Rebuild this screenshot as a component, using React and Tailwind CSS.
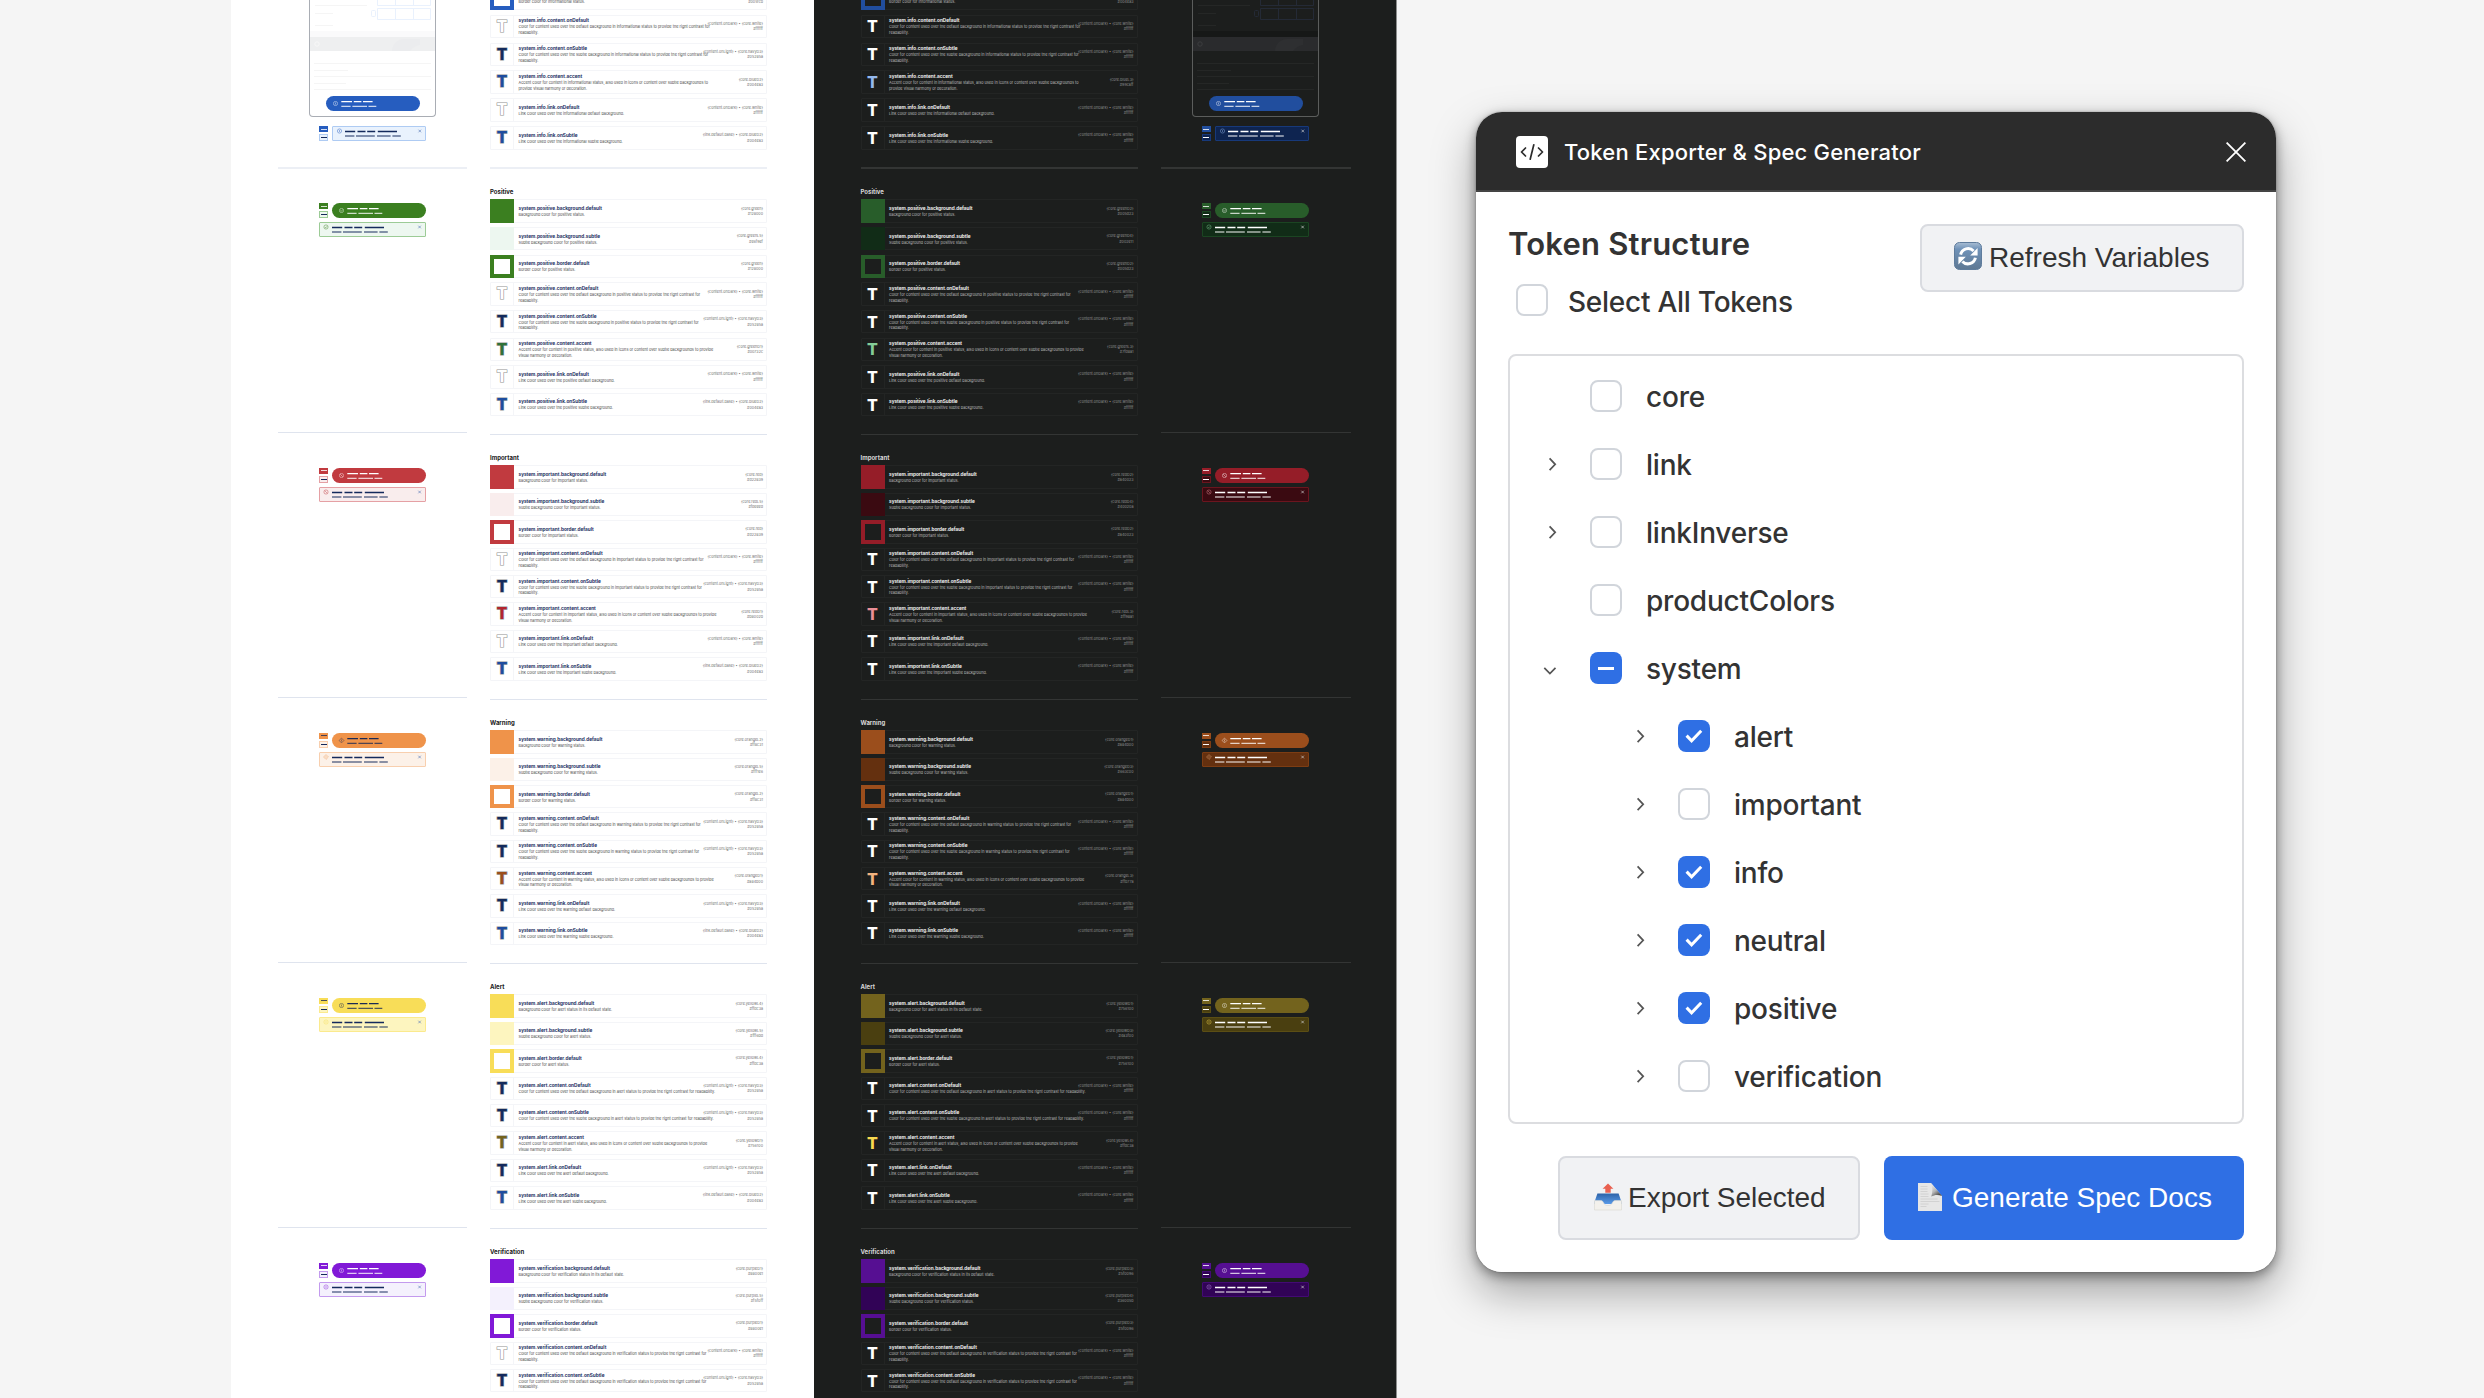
import React from "react";
import { clsx } from "clsx";

const WHITE = ["{content.onDark} • {core.white}", "#ffffff"];
const NAVY = ["{content.onLight} • {core.navyD3}", "#05285a"];
const LINK = ["{link.default.base} • {core.blueD2}", "#004ea3"];

const SECTIONS = [
  {
    key: "info",
    noun: "informational",
    rowsH: "h-[169px]",
    previewH: "h-[169px]",
    gap: "gap-[4.5px]",
    light: {
      main: "#265dbf", subtle: "#e9f2fd", edge: "#aecbf3", accent: "#1d4c9f", pillInk: "#ffffff",
      def: ["{core.blue}", "#005fcb"], sub: ["{core.blueL5}", "#e6f2ff"], acc: ["{core.blueD2}", "#004ea3"],
      onDef: "outline",
    },
    dark: {
      main: "#214e9e", subtle: "#0e2450", edge: "#17397a", accent: "#94b9ee", pillInk: "#ffffff",
      def: ["{core.blueD2}", "#004ea3"], sub: ["{core.blueD4}", "#002652"], acc: ["{core.blueL3}", "#99caff"],
    },
  },
  {
    key: "positive", title: "Positive",
    rowsH: "h-[266px]", previewH: "h-[264px]", gap: "gap-[4.25px]",
    light: {
      main: "#3b7f20", subtle: "#edf7f0", edge: "#9ccb96", accent: "#2f7138", pillInk: "#ffffff",
      def: ["{core.green}", "#128000"], sub: ["{core.greenL5}", "#e6f9ef"], acc: ["{core.greenD1}", "#00732c"],
      onDef: "outline",
    },
    dark: {
      main: "#285d2a", subtle: "#112c17", edge: "#1b4522", accent: "#83cd97", pillInk: "#ffffff",
      def: ["{core.greenD2}", "#005d23"], sub: ["{core.greenD4}", "#002e11"], acc: ["{core.greenL3}", "#7fd8a1"],
    },
  },
  {
    key: "important", title: "Important",
    rowsH: "h-[265px]", previewH: "h-[265px]", gap: "gap-[4px]",
    light: {
      main: "#c13a3f", subtle: "#f9eded", edge: "#e5a0a4", accent: "#b3252f", pillInk: "#ffffff",
      def: ["{core.red}", "#d22839"], sub: ["{core.redL5}", "#fdeeed"], acc: ["{core.redD1}", "#b8002b"],
      onDef: "outline",
    },
    dark: {
      main: "#951d28", subtle: "#3a0a11", edge: "#6b151e", accent: "#ea8f97", pillInk: "#ffffff",
      def: ["{core.redD2}", "#a40023"], sub: ["{core.redD4}", "#40020a"], acc: ["{core.redL3}", "#ff98a1"],
    },
  },
  {
    key: "warning", title: "Warning",
    rowsH: "h-[264px]", previewH: "h-[265px]", gap: "gap-[3.95px]",
    light: {
      main: "#ef934a", subtle: "#fcf1e8", edge: "#f8cfae", accent: "#9b4e1c", pillInk: "#1b2a55",
      def: ["{core.orangeL2}", "#ff8c31"], sub: ["{core.orangeL5}", "#fff1e6"], acc: ["{core.orangeD1}", "#a84b00"],
      onDef: "navy",
    },
    dark: {
      main: "#9b4e1c", subtle: "#64300f", edge: "#7d3d13", accent: "#f2b37f", pillInk: "#ffffff",
      def: ["{core.orangeD1}", "#a84b00"], sub: ["{core.orangeD3}", "#663c00"], acc: ["{core.orangeL3}", "#ffb77a"],
    },
  },
  {
    key: "alert", title: "Alert", phrase: " in its default state", wide: true,
    rowsH: "h-[265px]", previewH: "h-[265px]", gap: "gap-[4px]",
    light: {
      main: "#f8dd58", subtle: "#fdf5bf", edge: "#fbea8e", accent: "#73631d", pillInk: "#1b2a55",
      def: ["{core.yellowL4}", "#ffdc3a"], sub: ["{core.yellowL5}", "#fff6bd"], acc: ["{core.yellowD1}", "#756100"],
      onDef: "navy",
    },
    dark: {
      main: "#73631d", subtle: "#4a3f10", edge: "#5b4e14", accent: "#f8d94f", pillInk: "#ffffff",
      def: ["{core.yellowD1}", "#756100"], sub: ["{core.yellowD3}", "#4a3f00"], acc: ["{core.yellowL4}", "#ffdc3a"],
    },
  },
  {
    key: "verification", title: "Verification", phrase: " in its default state",
    rowsH: "h-[264px]", previewH: "h-[264px]", gap: "gap-[4px]",
    light: {
      main: "#8119d7", subtle: "#f4f1fd", edge: "#c39aee", accent: "#6a12b3", pillInk: "#ffffff",
      def: ["{core.purpleD1}", "#8800e1"], sub: ["{core.purpleL5}", "#f5f0ff"], acc: ["{core.purpleD2}", "#7300be"],
      onDef: "outline",
    },
    dark: {
      main: "#560f92", subtle: "#310356", edge: "#430a74", accent: "#c596f0", pillInk: "#ffffff",
      def: ["{core.purpleD3}", "#5f0096"], sub: ["{core.purpleD4}", "#36005b"], acc: ["{core.purpleL3}", "#cc99ff"],
    },
  },
];

function buildRows(s, dark) {
  const c = dark ? s.dark : s.light;
  const n = s.noun || s.key;
  const tail = " to provide the right contrast for";
  const content = (bg) =>
    s.wide
      ? [`Color for content used over the ${bg} background in ${n} status${tail} readability.`]
      : [`Color for content used over the ${bg} background in ${n} status${tail}`, "readability."];
  const accent =
    s.key === "info"
      ? [`Accent color for content in ${n} status, also used in icons or content over subtle backgrounds to`, "provide visual harmony or decoration."]
      : [`Accent color for content in ${n} status, also used in icons or content over subtle backgrounds to provide`, "visual harmony or decoration."];
  const onDef = dark ? "#ffffff" : c.onDef === "navy" ? "#142a5c" : "#ffffff";
  const onDefRef = dark || c.onDef !== "navy" ? WHITE : NAVY;
  const rows = [
    { t: "background.default", k: "fill", color: c.main, d: [`Background color for ${n} status${s.phrase || ""}.`], r: c.def },
    { t: "background.subtle", k: "fill", color: c.subtle, d: [`Subtle background color for ${n} status.`], r: c.sub },
    { t: "border.default", k: "ring", color: c.main, d: [`Border color for ${n} status.`], r: c.def },
    { t: "content.onDefault", k: "T", color: onDef, d: content("default"), r: onDefRef },
    { t: "content.onSubtle", k: "T", color: dark ? "#ffffff" : "#142a5c", d: content(s.key === "verification" ? "default" : "subtle"), r: dark ? WHITE : NAVY },
    { t: "content.accent", k: "T", color: c.accent, d: accent, r: c.acc },
    { t: "link.onDefault", k: "T", color: onDef, d: [`Link color used over the ${n} default background.`], r: onDefRef },
    { t: "link.onSubtle", k: "T", color: dark ? "#ffffff" : "#1d4c9f", d: [`Link color used over the ${n} subtle background.`], r: dark ? WHITE : LINK },
  ];
  if (s.key === "info") return rows.slice(2);
  if (s.key === "verification") return rows.slice(0, 5);
  return rows;
}

function Swatch({ row, dark }) {
  if (row.k === "fill") return <div className="w-6 shrink-0 self-stretch" style={{ background: row.color }} />;
  if (row.k === "ring")
    return <div className="w-6 shrink-0 self-stretch border-4" style={{ borderColor: row.color }} />;
  return (
    <div
      className={clsx(
        "flex w-6 shrink-0 items-center justify-center self-stretch border-r pl-px font-['Inter'] font-extrabold leading-none",
        dark ? "border-[#232524] text-[16px]" : "border-[#f4f5f8] text-[15.5px] [-webkit-text-stroke:1.2px_#929292] [paint-order:stroke_fill]"
      )}
      style={{ color: row.color }}
    >
      T
    </div>
  );
}

function TokenRow({ section, row, dark }) {
  const atTop = section.key === "info" && row.k === "ring";
  return (
    <div
      className={clsx(
        "flex h-[23.4px] shrink-0 items-center whitespace-nowrap rounded-[1px] border",
        dark ? "border-[#232524]" : "border-[#f4f5f8]"
      )}
    >
      <div className="-my-px -ml-px flex self-stretch">
        <Swatch row={row} dark={dark} />
      </div>
      <div className={clsx("ml-[4.5px] flex min-w-0 flex-1 flex-col", atTop && "pt-[7px]")}>
        {!atTop && (
          <div className={clsx("text-[4.7px] font-bold leading-[7px]", dark ? "text-[#f0f0f0]" : "text-[#1c2f5f]")}>
            system.{section.key}.{row.t}
          </div>
        )}
        {row.d.map((line) => (
          <div key={line} className={clsx("text-[3.83px] leading-[5.4px]", dark ? "text-[#b9bab9]" : "text-[#4a4a4a]")}>
            {line}
          </div>
        ))}
      </div>
      <div className={clsx("mr-[3px] shrink-0 text-right text-[3.7px] leading-[5.5px] -ml-[90px]", dark ? "text-[#8f9090]" : "text-[#6f6f6f]")}>
        {atTop ? (
          <div className="pt-[5.5px]">{row.r[1]}</div>
        ) : (
          row.r.map((line) => <div key={line}>{line}</div>)
        )}
      </div>
    </div>
  );
}

function RowsColumn({ dark }) {
  return (
    <div className="flex w-[277px] shrink-0 flex-col">
      {SECTIONS.map((s, i) => (
        <section
          key={s.key}
          className={clsx(
            "flex shrink-0 flex-col",
            s.rowsH,
            s.key === "info" ? "border-b-2" : "border-b",
            dark ? "border-[#333534]" : i === 0 ? "border-[#eceff5]" : "border-[#dfe4ee]"
          )}
        >
          {s.title ? (
            <div className={clsx("flex h-[30.4px] shrink-0 items-end pb-[3.5px] text-[6px] font-bold leading-[9px]", dark ? "text-[#d8d8d8]" : "text-[#1a1a1a]")}>
              {s.title}
            </div>
          ) : (
            <div className="-mt-[13.2px] shrink-0" />
          )}
          <div className={clsx("flex flex-col", s.gap)}>
            {buildRows(s, dark).map((row) => (
              <TokenRow key={row.t} section={s} row={row} dark={dark} />
            ))}
          </div>
        </section>
      ))}
    </div>
  );
}

function StatusGlyph({ x, y, kind, color }) {
  return (
    <g stroke={color} strokeWidth="0.6" fill="none" opacity="0.75">
      {kind === "warning" ? (
        <path d={`M${x} ${y - 2.4}l2.4 2.4l-2.4 2.4l-2.4 -2.4z`} />
      ) : (
        <circle cx={x} cy={y} r="2.1" />
      )}
      {kind === "positive" ? (
        <path d={`M${x - 1} ${y}l0.8 0.8l1.4 -1.6`} />
      ) : kind === "important" ? (
        <path d={`M${x - 1.3} ${y - 1.3}l2.6 2.6`} />
      ) : (
        <path d={`M${x} ${y - 1}v2`} />
      )}
    </g>
  );
}

function Pill({ s, c }) {
  return (
    <div className="h-[15px] w-[94px] rounded-full" style={{ background: c.main }}>
      <svg viewBox="0 0 94 15" className="block h-[15px] w-[94px]">
        <StatusGlyph x={9.5} y={7.5} kind={s.key} color={c.pillInk} />
        <g stroke={c.pillInk} strokeWidth="1.4">
          <path d="M15.3 5.6h10.7M27.8 5.6h7.6M37 5.6h9.6" />
          <path d="M15.3 10.4h9.3M26.4 10.4h14.6M42.5 10.4h7.8" opacity="0.75" />
        </g>
      </svg>
    </div>
  );
}

function SubtleBox({ s, c, dark, narrow }) {
  const ink = dark ? "#ffffff" : "#142a5c";
  const line = dark ? "#c9c9c9" : "#6684bd";
  const glyph = dark ? c.accent : c.main;
  const off = narrow ? 0.5 : 0;
  return (
    <div
      className={clsx("h-[15px] overflow-hidden rounded-[1px] border", narrow ? "w-[94px]" : "w-[107px]")}
      style={{ background: c.subtle, borderColor: c.edge }}
    >
      <svg viewBox={narrow ? "1 1 92 13" : "1 1 105 13"} className="block h-full w-full">
        <StatusGlyph x={7 + off} y={5} kind={s.key} color={glyph} />
        <g stroke={ink} strokeWidth="1.4">
          <path d="M13 5.5h10.2M25.5 5.5h8M35.2 5.5h8M45.8 5.5h19.2" />
          <path d="M13 10h9.4M24 10h18.8M45 10h13.6M60.4 10h8.4" opacity="0.65" />
        </g>
        <path
          d={narrow ? "M86.5 3.7l2.6 2.6m0 -2.6l-2.6 2.6" : "M99.3 3.7l2.6 2.6m0 -2.6l-2.6 2.6"}
          stroke={line}
          strokeWidth="0.7"
        />
      </svg>
    </div>
  );
}

function Badges({ c, dark }) {
  return (
    <div className="flex w-[9px] shrink-0 flex-col gap-[2px]">
      <div className="flex h-[6px] items-center justify-center" style={{ background: c.main }}>
        <div className="h-px w-[6px] opacity-80" style={{ background: c.pillInk }} />
      </div>
      <div className="flex h-[7px] items-center justify-center border" style={{ background: c.subtle, borderColor: c.edge }}>
        <div className={clsx("h-px w-[6px]", dark ? "bg-white" : "bg-[#142a5c]")} />
      </div>
    </div>
  );
}

function Phone({ s, c, dark }) {
  const grid = dark ? "#242a36" : "#e9f1fd";
  const rule = dark ? "#252726" : "#f5f5f5";
  return (
    <div
      className={clsx(
        "ml-[31px] flex h-[117px] w-[127px] flex-col justify-between rounded-b-[4px] border border-t-0 pb-[5px]",
        dark ? "border-[#5b5d5c]" : "border-[#a9adb4]"
      )}
    >
      <svg viewBox="0 0 125 95" className="block h-[95px] w-[125px]">
        <g fill="none" stroke={grid}>
          <path d="M67.5 0v5.5h53V0M85.5 0v5.5M103.5 0v5.5" />
          <path d="M67.5 8.5h53v11h-53zM85.5 8.5v11M103.5 8.5v11" />
          <rect x="61.5" y="10.5" width="4" height="6" rx="1" />
        </g>
        <path d="M5 5.5h52M5 13.5h18M5 25.5h18" stroke={rule} />
        <rect y="31" width="125" height="6" fill={dark ? "#161817" : "#fafafb"} />
        <rect y="37" width="125" height="14" fill={dark ? "#2a2b2d" : "#eeeff0"} />
        <path d="M82 51a12 12 0 0 1 12 -12h16v6a16 16 0 0 0 -10 6z" fill={dark ? "#2e2f31" : "#ebecee"} />
        <circle cx="7" cy="44" r="2.2" fill="none" stroke={dark ? "#3c3d3f" : "#f8f8f8"} />
        <path d="M4 63.5h117M4 76.5h117M4 70.5h34M4 83.5h32M4 89.5h117" stroke={rule} />
      </svg>
      <div className="ml-[16px] h-[15px]">
        <Pill s={s} c={c} />
      </div>
    </div>
  );
}

function PreviewColumn({ dark }) {
  return (
    <div className={clsx("flex shrink-0 flex-col", dark ? "w-[190px]" : "w-[189px]")}>
      {SECTIONS.map((s, i) => {
        const c = dark ? s.dark : s.light;
        return (
          <div
            key={s.key}
            className={clsx(
              "flex shrink-0 flex-col",
              s.previewH,
              i === 0 ? "border-b-2" : "border-b",
              dark ? "border-[#333534]" : i === 0 ? "border-[#eceff5]" : "border-[#dfe4ee]"
            )}
          >
            {i === 0 ? (
              <>
                <Phone s={s} c={c} dark={dark} />
                <div className="ml-[41px] mt-[9px] flex gap-1">
                  <Badges c={c} dark={dark} />
                  <SubtleBox s={s} c={c} dark={dark} narrow />
                </div>
              </>
            ) : (
              <div className={clsx("ml-[41px] flex flex-col gap-1", i === 1 ? "mt-[34px]" : "mt-[34.6px]")}>
                <div className="flex gap-1">
                  <Badges c={c} dark={dark} />
                  <Pill s={s} c={c} />
                </div>
                <SubtleBox s={s} c={c} dark={dark} />
              </div>
            )}
          </div>
        );
      })}
    </div>
  );
}

function Checkbox({ state }) {
  if (state === "on")
    return (
      <div className="flex size-8 shrink-0 items-center justify-center rounded-[8px] bg-[#2f6fe4]">
        <svg viewBox="0 0 32 32" className="size-8" fill="none" stroke="#fff" strokeWidth="3">
          <path d="M8.6 15.6l5 5.2l9.6 -10" />
        </svg>
      </div>
    );
  if (state === "mixed")
    return (
      <div className="flex size-8 shrink-0 items-center justify-center rounded-[8px] bg-[#2f6fe4]">
        <div className="h-[3px] w-4 bg-white" />
      </div>
    );
  return <div className="size-8 shrink-0 rounded-[8px] border-2 border-[#d1d5db] bg-white" />;
}

const TREE = [
  { label: "core" },
  { label: "link", chevron: "right" },
  { label: "linkInverse", chevron: "right" },
  { label: "productColors" },
  { label: "system", chevron: "down", state: "mixed" },
  { label: "alert", chevron: "right", child: true, state: "on" },
  { label: "important", chevron: "right", child: true },
  { label: "info", chevron: "right", child: true, state: "on" },
  { label: "neutral", chevron: "right", child: true, state: "on" },
  { label: "positive", chevron: "right", child: true, state: "on" },
  { label: "verification", chevron: "right", child: true },
];

function TreeItem({ item }) {
  return (
    <div className={clsx("flex h-[68px] items-center", item.child ? "pl-[112px]" : "pl-6")}>
      <div className="flex w-[56px] shrink-0 items-center">
        {item.chevron === "right" && (
          <svg viewBox="0 0 24 24" className="size-6" fill="none" stroke="#555" strokeWidth="1.7">
            <path d="M15.6 6.4l5.6 5.9l-5.6 5.9" />
          </svg>
        )}
        {item.chevron === "down" && (
          <svg viewBox="0 0 24 24" className="size-6" fill="none" stroke="#555" strokeWidth="1.7">
            <path d="M10.3 11.8l5.6 5.8l5.6 -5.8" />
          </svg>
        )}
      </div>
      <Checkbox state={item.state} />
      <span className="ml-6 pt-[2px] text-[28px] font-medium tracking-[-0.22px] text-[#333]">{item.label}</span>
    </div>
  );
}

function RefreshIcon() {
  return (
    <svg viewBox="0 0 28 28" className="size-7">
      <defs>
        <linearGradient id="refreshTile" x1="0" y1="0" x2="0" y2="1">
          <stop offset="0" stopColor="#a9bdd3" />
          <stop offset="0.25" stopColor="#6f92b8" />
          <stop offset="1" stopColor="#5e7893" />
        </linearGradient>
      </defs>
      <rect x="0.5" y="0.5" width="27" height="27" rx="5" fill="url(#refreshTile)" stroke="#5f7c9c" />
      <g fill="none" stroke="#fff" strokeWidth="3">
        <path d="M6.6 12.6A7.6 7.6 0 0 1 19.6 9" />
        <path d="M21.4 15.8A7.6 7.6 0 0 1 8.4 19.4" />
      </g>
      <path d="M23.6 6v7.6h-7.4zM4.4 22.4v-7.6h7.4z" fill="#fff" />
    </svg>
  );
}

function OutboxIcon() {
  return (
    <svg viewBox="0 0 28 28" className="size-7">
      <defs>
        <linearGradient id="trayBlue" x1="0" y1="0" x2="0" y2="1">
          <stop offset="0" stopColor="#2c62a8" />
          <stop offset="1" stopColor="#5a9be8" />
        </linearGradient>
      </defs>
      <path d="M3.4 10.5h21.2l2.9 8.5v2h-27v-2z" fill="url(#trayBlue)" />
      <path d="M0.5 17.6h6.4c1.6 0 2 1 2.8 2.4c0.8 1.5 1.8 2.6 4.3 2.6s3.5-1.1 4.3-2.6c0.8-1.4 1.2-2.4 2.8-2.4h6.4v9.4h-27z" fill="#f3f1ec" stroke="#d8d6d0" strokeWidth="0.6" />
      <path d="M14 0.4l5.4 5.4h-2.7v4h-5.4v-4H8.6z" fill="#e9604f" />
    </svg>
  );
}

function PageIcon() {
  return (
    <svg viewBox="0 0 28 28" className="size-7">
      <defs>
        <linearGradient id="pageCurl" x1="0.1" y1="0.2" x2="0.6" y2="1">
          <stop offset="0" stopColor="#e2e2e2" />
          <stop offset="0.5" stopColor="#b5b5b5" />
          <stop offset="1" stopColor="#444444" />
        </linearGradient>
      </defs>
      <path d="M2 0h13l11 13v15H2z" fill="#e6e6e6" />
      <path d="M4.5 3.5h7M4.5 6h7M4.5 8.5h7M4.5 11h8M4.5 13.5h8M4.5 16h17M4.5 18.5h19M4.5 21h8M4.5 23.5h6" stroke="#cfcfcf" strokeWidth="0.9" />
      <path d="M15 0l11 13c-4 -1.6 -7.5 -1.3 -10.8 0.6c1.6 -4.6 1.6 -9 -0.2 -13.6z" fill="url(#pageCurl)" />
    </svg>
  );
}

function PluginWindow() {
  return (
    <div className="flex h-[1160px] w-[800px] flex-col overflow-hidden rounded-[26px] bg-white font-['Inter',sans-serif] text-[#333]">
      <header className="flex h-20 shrink-0 items-center border-b-2 border-[#444] bg-[#2c2c2c] pl-10 pr-[30px] pt-px">
        <div className="flex size-8 items-center justify-center rounded-[4px] bg-white">
          <svg viewBox="0 0 32 32" className="size-8" fill="none" stroke="#2c2c2c" strokeWidth="1.7" strokeLinecap="round" strokeLinejoin="round">
            <path d="M9.5 12l-4 4l4 4M22.5 12l4 4l-4 4M17.8 8.8l-3.6 14.4" />
          </svg>
        </div>
        <h1 className="ml-4 pt-px text-[22px] font-medium tracking-[0.2px] text-white">Token Exporter &amp; Spec Generator</h1>
        <svg viewBox="0 0 20 20" className="ml-auto size-5" stroke="#fff" strokeWidth="1.8">
          <path d="M0.6 0.6l18.8 18.8M19.4 0.6L0.6 19.4" />
        </svg>
      </header>

      <div className="flex flex-1 flex-col px-8 pt-8">
        <div className="flex h-[130px] shrink-0 justify-between">
          <div className="flex flex-col">
            <h2 className="text-[31px] font-semibold leading-[40px] tracking-[0.2px]">Token Structure</h2>
            <label className="ml-2 mt-5 flex h-8 items-center">
              <Checkbox />
              <span className="ml-5 pt-[3px] text-[28px] font-medium tracking-[-0.25px]">Select All Tokens</span>
            </label>
          </div>
          <button className="flex h-[68px] w-[324px] items-center rounded-[8px] border-2 border-[#d9dbe0] bg-[#f1f2f4] pl-8 pb-1 font-['Liberation_Sans',Arial,sans-serif] text-[28px]">
            <RefreshIcon />
            <span className="ml-[7px] pt-[3px]">Refresh Variables</span>
          </button>
        </div>

        <div className="flex h-[770px] shrink-0 flex-col rounded-[8px] border-2 border-[#dcdde0] pt-[6px]">
          {TREE.map((item) => (
            <TreeItem key={item.label} item={item} />
          ))}
        </div>

        <footer className="mt-8 flex justify-end gap-6 font-['Liberation_Sans',Arial,sans-serif] text-[28px]">
          <button className="flex h-[84px] w-[302px] items-center rounded-[8px] border-2 border-[#d9dbe0] bg-[#f1f2f4] pb-[3px] pl-[34px]">
            <OutboxIcon />
            <span className="ml-[6px] pt-[2px]">Export Selected</span>
          </button>
          <button className="flex h-[84px] w-[360px] items-center rounded-[8px] bg-[#2f6fe4] pb-[3px] pl-8 text-white">
            <PageIcon />
            <span className="ml-2 pt-[2px]">Generate Spec Docs</span>
          </button>
        </footer>
      </div>
    </div>
  );
}

export default function App() {
  return (
    <div className="flex h-[1398px] w-[2484px] overflow-hidden bg-[#f5f5f5] font-['Inter',sans-serif]">
      <div className="ml-[231px] flex h-full w-[583px] shrink-0 gap-[23px] overflow-hidden bg-white pl-[47px]">
        <PreviewColumn />
        <RowsColumn />
      </div>
      <div className="flex h-full w-[583px] shrink-0 gap-[23px] overflow-hidden border-r border-[#8d8e8e] bg-[#1c1e1d] pl-[46.5px]">
        <RowsColumn dark />
        <PreviewColumn dark />
      </div>
      <div className="ml-[79px] mt-[112px] h-[1160px] w-[800px] shrink-0 rounded-[26px] shadow-[0_20px_44px_rgba(0,0,0,0.34),0_4px_12px_rgba(0,0,0,0.4),0_0_2px_rgba(0,0,0,0.3)]">
        <PluginWindow />
      </div>
    </div>
  );
}
